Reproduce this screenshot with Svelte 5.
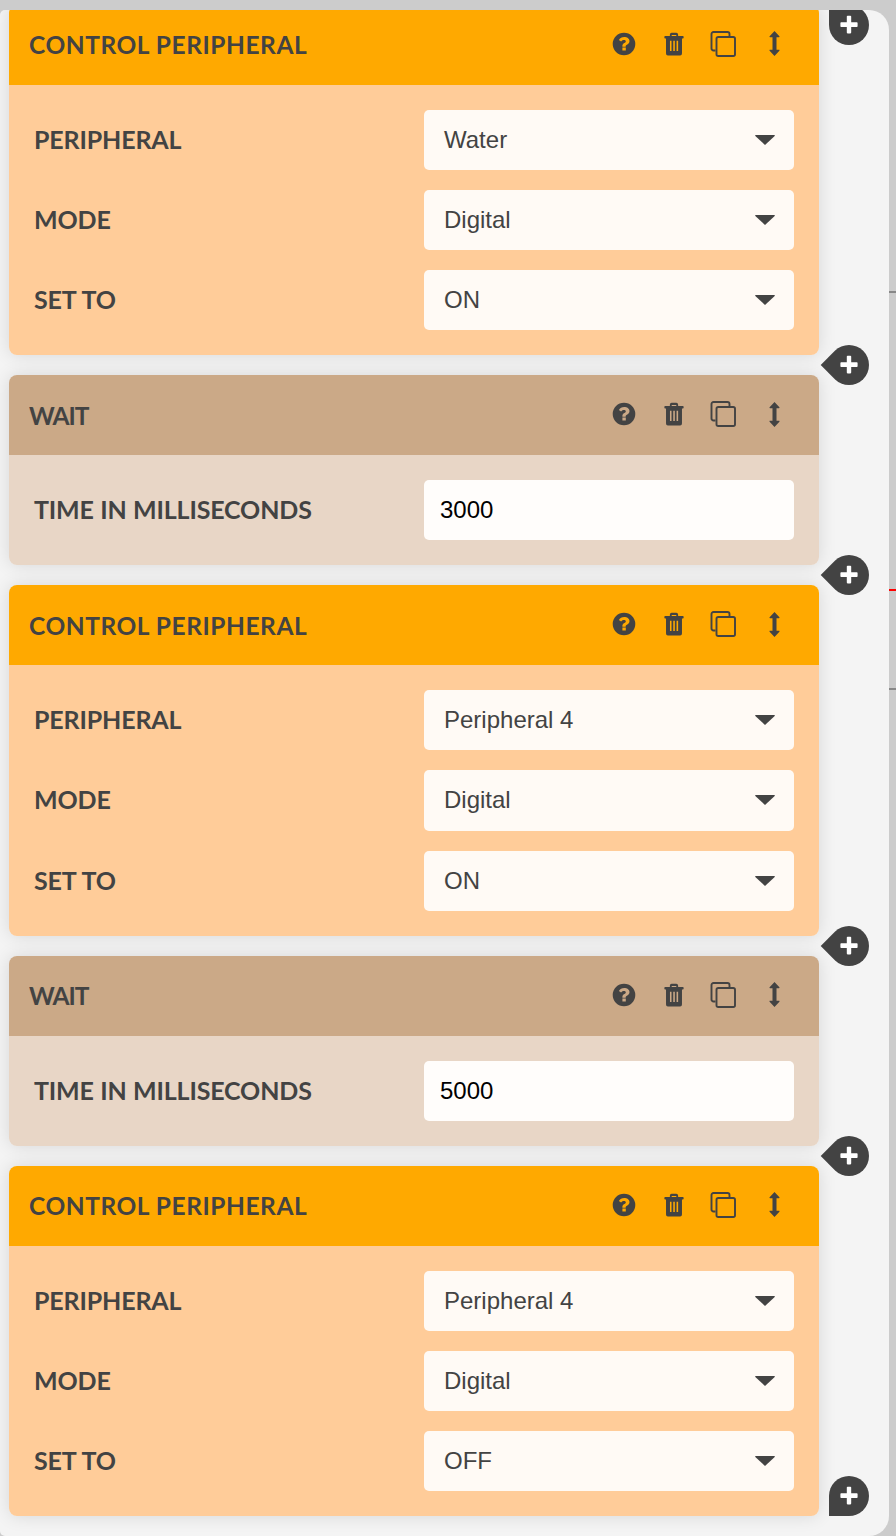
<script>
  const blocks = [
    { type: 'control', rows: [['PERIPHERAL', 'Water'], ['MODE', 'Digital'], ['SET TO', 'ON']] },
    { type: 'wait', value: '3000' },
    { type: 'control', rows: [['PERIPHERAL', 'Peripheral 4'], ['MODE', 'Digital'], ['SET TO', 'ON']] },
    { type: 'wait', value: '5000' },
    { type: 'control', rows: [['PERIPHERAL', 'Peripheral 4'], ['MODE', 'Digital'], ['SET TO', 'OFF']] }
  ];
</script>

{#snippet plus()}
  <svg class="plus" viewBox="0 0 20 20" aria-hidden="true">
    <path d="M7.8 1.6a.8.8 0 0 1 .8-.8h2.8a.8.8 0 0 1 .8.8v5.6h5.6a.8.8 0 0 1 .8.8v3.2a.8.8 0 0 1-.8.8h-5.6v5.6a.8.8 0 0 1-.8.8H8.6a.8.8 0 0 1-.8-.8v-5.6H2.2a.8.8 0 0 1-.8-.8V8a.8.8 0 0 1 .8-.8h5.6z" />
  </svg>
{/snippet}

{#snippet icons()}
  <div class="icons">
    <svg class="ic" viewBox="0 0 24 24" aria-hidden="true">
      <path fill-rule="evenodd" d="M12 .7a11.300 11.300 0 1 1 0 22.600a11.300 11.300 0 0 1 0-22.600zM10.400 15.400v3.200h3.400v-3.200zM12.300 4.900c-2.600 0-4.300 1.200-5.400 3l2.200 1.700c.7-.9 1.300-1.500 2.800-1.500 1 0 1.900.5 1.900 1.300 0 .7-.5 1-1.500 1.600-1.200.7-1.900 1.400-1.900 3v.8h3.300v-.6c0-.7.4-1 1.300-1.500 1.400-.8 2.500-1.800 2.500-3.600 0-2.800-2.700-4.200-5.200-4.200z" />
    </svg>
    <svg class="ic trash" viewBox="0 0 24 24" preserveAspectRatio="none" aria-hidden="true">
      <path fill-rule="evenodd" d="M2.300 3.900h5.200V2.800C7.500 1.600 8.400.8 9.500.8h5c1.100 0 2 .8 2 2v1.100h5.200c.5 0 .8.300.8.800v1c0 .4-.3.800-.8.800h-1v14.700c0 1.300-.9 2.300-2 2.300H5.300c-1.100 0-2-1-2-2.300V6.500h-1c-.5 0-.8-.4-.8-.8v-1c0-.5.3-.8.800-.8zM9.500 3.900h5V2.900h-5zM7.600 8.800v10.200h1.700V8.800zM11.200 8.800v10.200h1.700V8.800zM14.800 8.800v10.200h1.700V8.800z" />
    </svg>
    <svg class="ic copy" viewBox="0 0 26 26" aria-hidden="true">
      <path d="M5.500 19.500H3.500a2 2 0 0 1-2-2V3a2 2 0 0 1 2-2h14a2 2 0 0 1 2 2v2" />
      <rect x="6.500" y="6" width="18.500" height="19" rx="1.800" />
    </svg>
    <svg class="ic arrow" viewBox="0 0 11 25" aria-hidden="true">
      <path d="M5.500 0l4.900 5.300c.3.400.1.900-.4.900H7.500v12.600H10c.5 0 .7.500.4.900L5.500 25 .6 19.700c-.3-.4-.1-.9.4-.9h2.500V6.200H1c-.5 0-.7-.5-.4-.9z" />
    </svg>
  </div>
{/snippet}

<main class="panel">
  <div class="stack">
    {#each blocks as block, i}
      <section class="block {block.type}">
        <header class="head">
          <h3>{block.type === 'wait' ? 'WAIT' : 'CONTROL PERIPHERAL'}</h3>
          {@render icons()}
        </header>
        <div class="content">
          {#if block.type === 'wait'}
            <div class="row">
              <span class="label">TIME IN MILLISECONDS</span>
              <div class="input">{block.value}</div>
            </div>
          {:else}
            {#each block.rows as [label, value]}
              <div class="row">
                <span class="label">{label}</span>
                <div class="select">
                  <span>{value}</span>
                  <svg class="caret" viewBox="0 0 20 10" aria-hidden="true"><path d="M.8 0h18.400c.6 0 .9.700.5 1.100L10 10 .3 1.100C-.1.700.2 0 .8 0z" /></svg>
                </div>
              </div>
            {/each}
          {/if}
        </div>
        {#if i === 0}
          <div class="bubble top">{@render plus()}</div>
        {/if}
        {#if i === blocks.length - 1}
          <div class="bubble bottom">{@render plus()}</div>
        {:else}
          <div class="bubble tip"><span class="unrotate">{@render plus()}</span></div>
        {/if}
      </section>
    {/each}
  </div>
  <i class="tick t1"></i>
  <i class="tick t2"></i>
  <i class="tick t3"></i>
</main>

<style>
  :global(body) {
    margin: 0;
    background: #cccccc;
  }
  .panel {
    position: relative;
    width: 889px;
    height: 1526px;
    margin-top: 10px;
    background: #f4f4f4;
    border-radius: 5px 20px 20px 5px;
    box-sizing: border-box;
  }
  .stack {
    height: 100%;
    padding-left: 9px;
    display: flex;
    flex-direction: column;
    gap: 20px;
    overflow: hidden;
    border-radius: inherit;
  }
  .block {
    position: relative;
    flex: none;
    width: 810px;
    border-radius: 8px;
    box-shadow: 0 0 18px rgba(0, 0, 0, 0.12);
  }
  .block:first-child {
    margin-top: -5.400px;
  }
  .head {
    height: 80px;
    display: flex;
    align-items: center;
    justify-content: space-between;
    padding: 0 39px 0 20px;
    box-sizing: border-box;
    border-radius: 8px 8px 0 0;
  }
  h3 {
    margin: 0;
    font: 700 24.500px "Lato", sans-serif;
    letter-spacing: 0.550px;
    color: #434343;
  }
  .wait h3 {
    letter-spacing: -1px;
  }
  .content {
    padding: 25px;
    display: flex;
    flex-direction: column;
    gap: 20px;
    border-radius: 0 0 8px 8px;
  }
  .control .head { background: #ffa900; }
  .control .content { background: #ffcc99; }
  .wait .head { background: #cba987; }
  .wait .content { background: #e8d6c6; }
  .icons {
    display: flex;
    align-items: center;
    margin-top: -2px;
  }
  .ic {
    display: block;
    width: 24px;
    height: 24px;
    fill: #434343;
  }
  .trash {
    width: 22px;
    margin-left: 27px;
  }
  .copy {
    width: 26px;
    height: 26px;
    margin-left: 25px;
    fill: none;
    stroke: #434343;
    stroke-width: 1.900;
  }
  .arrow {
    width: 11px;
    height: 25px;
    margin-left: 33px;
  }
  .row {
    display: flex;
    align-items: center;
    justify-content: space-between;
  }
  .label {
    position: relative;
    top: -1px;
    font: 700 25px "Lato", sans-serif;
    letter-spacing: -0.150px;
    word-spacing: 0.500px;
    color: #434343;
  }
  .select, .input {
    width: 370px;
    box-sizing: border-box;
    border-radius: 5px;
    display: flex;
    align-items: center;
    font: 24px "Liberation Sans", Arial, sans-serif;
  }
  .select {
    height: 60.200px;
    background: #fffaf5;
    color: #434343;
    padding: 0 19px 0 20px;
    justify-content: space-between;
  }
  .input {
    height: 60px;
    background: #fffdfb;
    color: #000;
    padding: 0 16px;
  }
  .caret {
    display: block;
    width: 20px;
    height: 10px;
    fill: #434343;
  }
  .bubble {
    position: absolute;
    left: 820px;
    width: 40px;
    height: 40px;
    background: #434343;
    border-radius: 50%;
    display: flex;
    align-items: center;
    justify-content: center;
    z-index: 2;
  }
  .bubble.top { top: 0; border-radius: 0 50% 50% 50%; }
  .bubble.bottom { bottom: 0; border-radius: 50% 50% 50% 0; }
  .bubble.tip {
    bottom: -30px;
    border-radius: 50% 50% 50% 0;
    transform: rotate(45deg);
  }
  .unrotate {
    display: flex;
    transform: rotate(-45deg);
  }
  .plus {
    display: block;
    width: 20px;
    height: 20px;
    fill: #ffffff;
  }
  .tick {
    position: absolute;
    left: 889px;
    width: 7px;
    height: 2px;
    background: #888;
  }
  .t1 { top: 281px; }
  .t2 { top: 579px; background: #f00; }
  .t3 { top: 678px; }
</style>
